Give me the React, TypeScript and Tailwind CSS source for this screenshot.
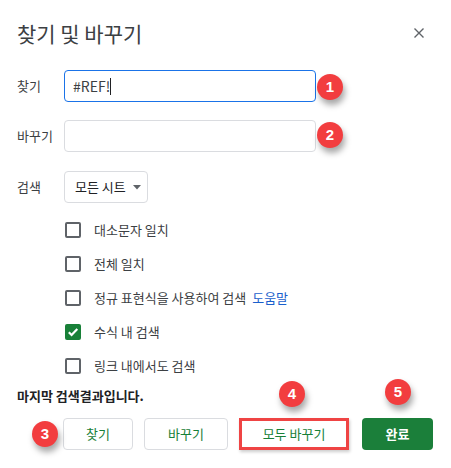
import type { ReactNode } from 'react';

const FONT = "font-['Noto_Sans_CJK_KR','Noto_Sans',sans-serif]";

function Badge({ n, className }: { n: number; className: string }) {
  return (
    <div
      className={`absolute w-[26px] h-[26px] rounded-full bg-[#f23d3f] text-white text-[15px] font-bold flex items-center justify-center shadow-[2px_5px_6px_rgba(0,0,0,0.35)] font-['Liberation_Sans',Arial,sans-serif] ${className}`}
    >
      {n}
    </div>
  );
}

function Check({ checked, children }: { checked?: boolean; children: ReactNode }) {
  return (
    <div className="h-[34px] flex items-center">
      {checked ? (
        <span className="w-[16px] h-[16px] rounded-[2px] bg-[#188038] flex items-center justify-center">
          <svg width="12" height="12" viewBox="0 0 12 12">
            <path d="M1.8 6.2 L4.6 9 L10.3 3" fill="none" stroke="white" strokeWidth="2.2" />
          </svg>
        </span>
      ) : (
        <span className="w-[16px] h-[16px] rounded-[2px] border-2 border-[#5f6368]" />
      )}
      <span className="ml-[13px] text-[13px] text-[#3c4043]">{children}</span>
    </div>
  );
}

export default function App() {
  return (
    <div className={`relative w-[451px] h-[468px] bg-white overflow-hidden ${FONT}`}>
      {/* header */}
      <div className="flex items-center justify-between pl-[17px] pr-[27px] pt-[21px]">
        <h1 className="text-[21px] leading-[24px] text-[#3c4043]">찾기 및 바꾸기</h1>
        <svg width="10" height="10" viewBox="0 0 10 10">
          <path d="M0.5 0.5 L9.5 9.5 M9.5 0.5 L0.5 9.5" stroke="#5f6368" strokeWidth="1.4" />
        </svg>
      </div>

      <div className="px-[17px] mt-[25px]">
        <div className="flex items-center">
          <span className="w-[47px] text-[13px] text-[#3c4043]">찾기</span>
          <div className="w-[252px] h-[32px] rounded-[4px] border border-[#1a73e8] flex items-center px-[8px] text-[14px] text-[#3c4043]">
            #REF!<span className="w-px h-[17px] bg-[#202124]" />
          </div>
        </div>
        <div className="flex items-center mt-[18px]">
          <span className="w-[47px] text-[13px] text-[#3c4043]">바꾸기</span>
          <div className="w-[252px] h-[32px] rounded-[4px] border border-[#dadce0]" />
        </div>
        <div className="flex items-center mt-[19px]">
          <span className="w-[47px] text-[13px] text-[#3c4043]">검색</span>
          <div className="w-[84px] h-[32px] rounded-[4px] border border-[#dadce0] flex items-center pl-[10px] gap-[7px] text-[13px] text-[#202124]">
            모든 시트
            <svg width="8" height="5" viewBox="0 0 8 5">
              <path d="M0 0 L8 0 L4 4.5 Z" fill="#5f6368" />
            </svg>
          </div>
        </div>

        <div className="ml-[48px] mt-[10px]">
          <Check>대소문자 일치</Check>
          <Check>전체 일치</Check>
          <Check>
            정규 표현식을 사용하여 검색 <span className="ml-[3px] text-[#1a5fcc]">도움말</span>
          </Check>
          <Check checked>수식 내 검색</Check>
          <Check>링크 내에서도 검색</Check>
        </div>

        <p className="mt-[3px] text-[13px] leading-[20px] font-bold text-[#202124]">마지막 검색결과입니다.</p>

        <div className="flex items-center mt-[12px] ml-[46px] text-[13px]">
          <button className="w-[70px] h-[32px] rounded-[4px] border border-[#dadce0] text-[#188038]">찾기</button>
          <button className="ml-[11px] w-[84px] h-[32px] rounded-[4px] border border-[#dadce0] text-[#188038]">바꾸기</button>
          <button className="ml-[11px] w-[110px] h-[32px] border-[3px] border-[#ef4444] text-[#188038] shadow-[1px_2px_3px_rgba(0,0,0,0.2)]">모두 바꾸기</button>
          <button className="ml-[13px] w-[71px] h-[32px] rounded-[4px] bg-[#1b7f3a] text-white font-bold">완료</button>
        </div>
      </div>

      <Badge n={1} className="left-[317px] top-[74px]" />
      <Badge n={2} className="left-[317px] top-[122px]" />
      <Badge n={3} className="left-[32px] top-[421px]" />
      <Badge n={4} className="left-[279px] top-[381px]" />
      <Badge n={5} className="left-[385px] top-[379px]" />
    </div>
  );
}
